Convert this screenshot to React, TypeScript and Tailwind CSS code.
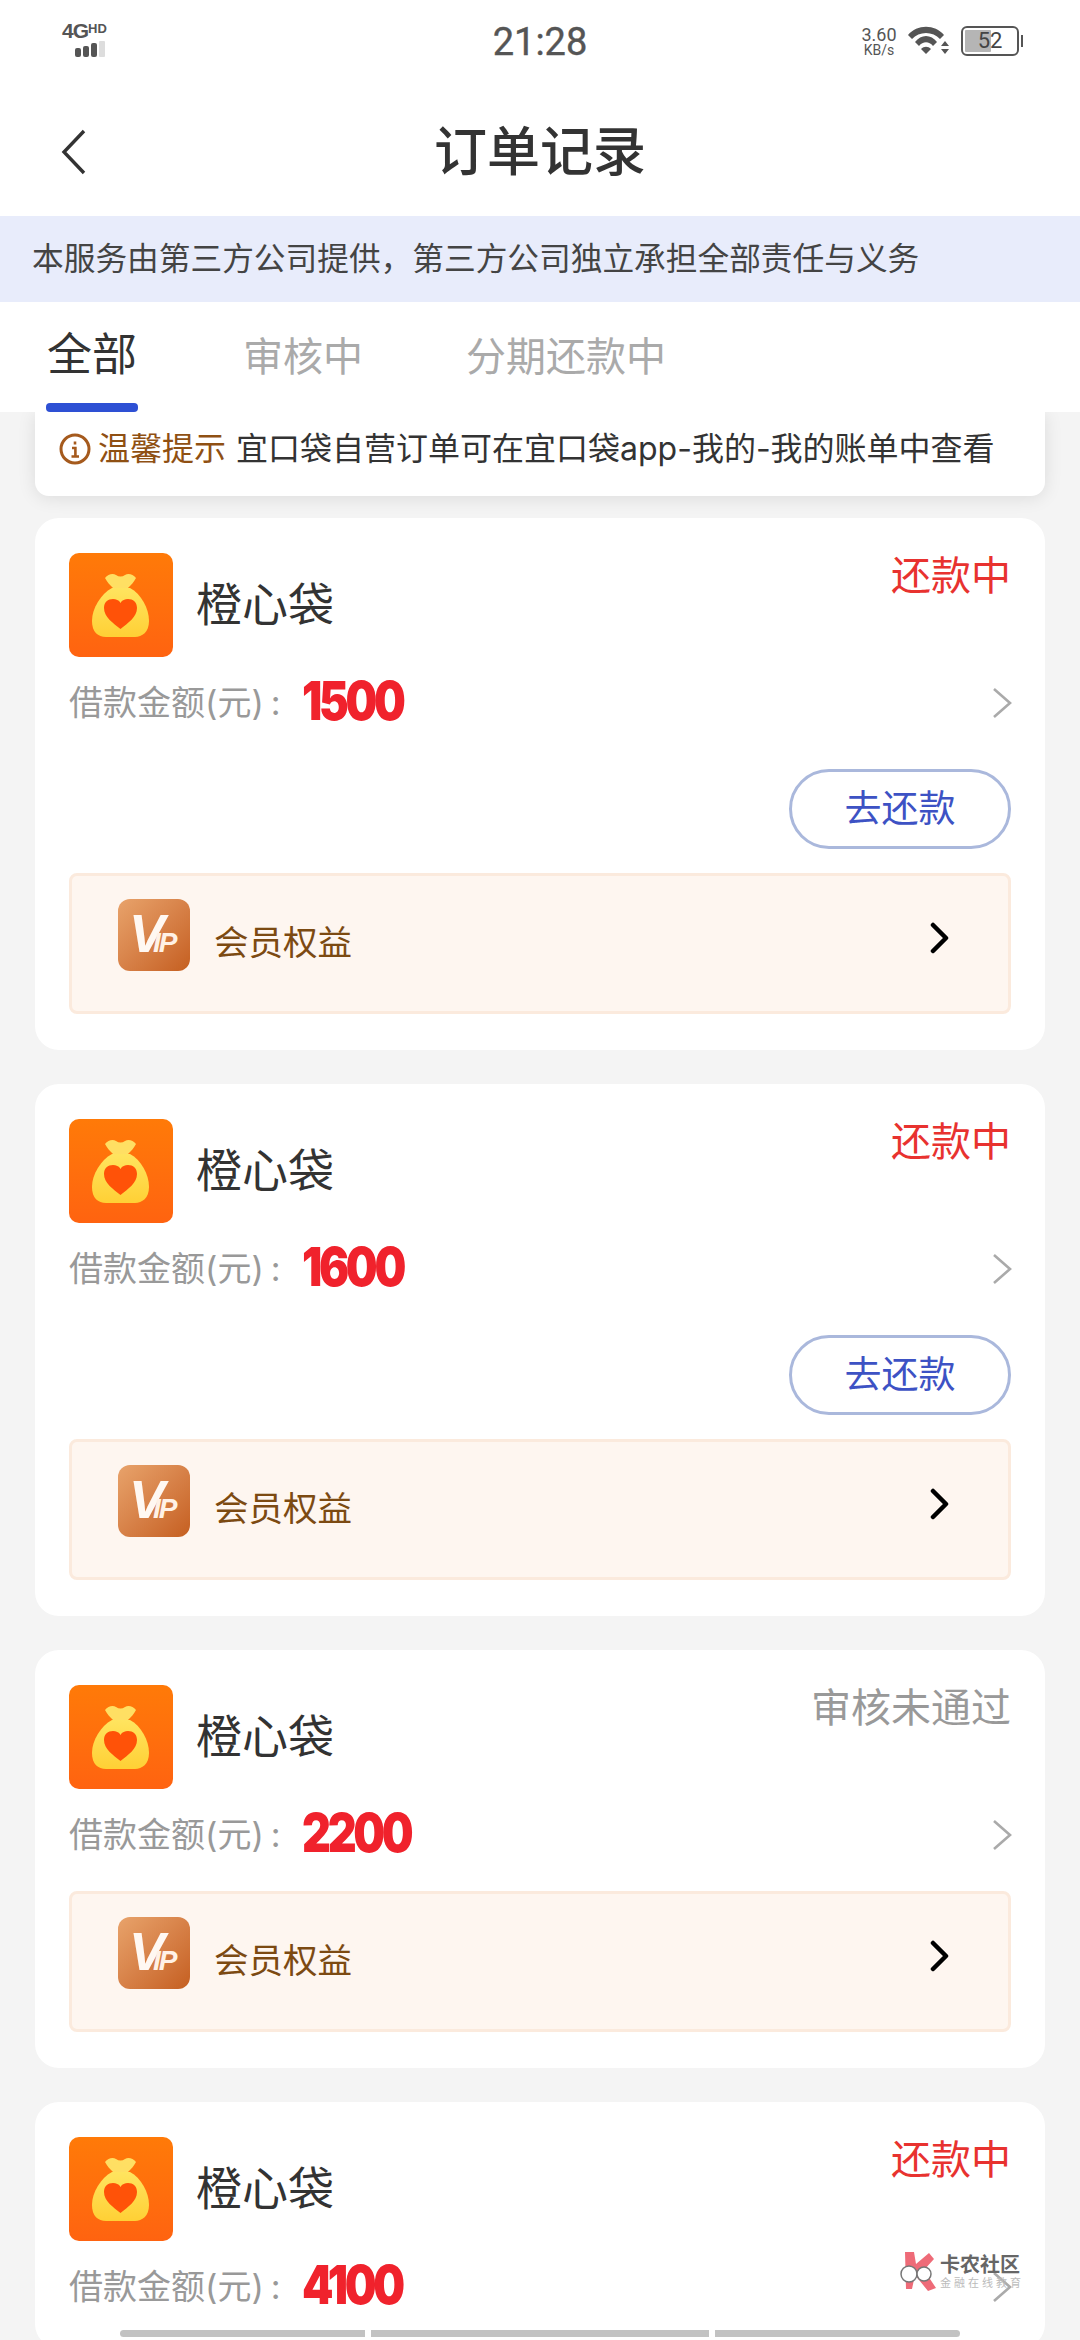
const CJK = "font-['Inter','Noto_Sans_CJK_SC',sans-serif]";

type Order = { amount: string; status: string; failed?: boolean; repay?: boolean; vip?: boolean };

const ORDERS: Order[] = [
  { amount: '1500', status: '还款中', repay: true, vip: true },
  { amount: '1600', status: '还款中', repay: true, vip: true },
  { amount: '2200', status: '审核未通过', failed: true, vip: true },
  { amount: '4100', status: '还款中' },
];

function BagIcon() {
  return (
    <div className="w-[104px] h-[104px] shrink-0 rounded-[10px] bg-gradient-to-b from-[#ff7a08] to-[#ff6310] flex items-center justify-center">
      <svg width="104" height="104" viewBox="0 0 104 104">
        <defs>
          <linearGradient id="bag" x1="0" y1="0" x2="0" y2="1">
            <stop offset="0" stopColor="#ffe45f" />
            <stop offset="1" stopColor="#ffd035" />
          </linearGradient>
        </defs>
        <path d="M36 25c3-4 8-5 11-3 3 2 6 2 9 0 3-2 8-1 11 3-2 4-5 7-8 10H44c-3-3-6-6-8-10z" fill="#ffdf63" />
        <path d="M43 35h18c11 6 19 20 19 33 0 11-7 16-14 16H37c-8 0-14-5-14-16 0-13 9-27 20-33z" fill="url(#bag)" />
        <path d="M51.5 76C44 70 35 64 35 55c0-6 4-9 9-9 3 0 6 1 7.5 4 1.5-3 4.5-4 7.5-4 5 0 9 3 9 9 0 9-9 15-16.5 21z" fill="#ff5208" />
      </svg>
    </div>
  );
}

function VipIcon() {
  return (
    <div className="w-[72px] h-[72px] rounded-[12px] bg-gradient-to-br from-[#e8a36b] to-[#c55f1f] overflow-hidden pl-[11px] pt-[2px]">
      <span className="font-['Liberation_Sans',sans-serif] font-bold italic text-[54px] leading-[64px] text-[#fff8f2] whitespace-nowrap">
        <span className="tracking-[-12px]">V</span>
        <span className="text-[28px] tracking-[-2px] text-[#fff1e6]">IP</span>
      </span>
    </div>
  );
}

function OrderCard({ order }: { order: Order }) {
  return (
    <div className="bg-white rounded-[24px] px-[34px] pt-[35px] pb-[36px]">
      <div className="flex justify-between items-start">
        <div className="flex items-center">
          <BagIcon />
          <span className="ml-[23px] -mt-[2px] text-[46px] leading-[60px] text-[#333]">橙心袋</span>
        </div>
        <span className={`text-[40px] leading-[46px] ${order.failed ? 'text-[#999]' : 'text-[#e8322f]'}`}>
          {order.status}
        </span>
      </div>
      <div className="mt-[21px] h-[50px] flex items-center justify-between">
        <div className="flex items-center">
          <span className="text-[34px] leading-[50px] text-[#999]">借款金额(元)</span>
          <span className="ml-[7px] text-[34px] leading-[50px] text-[#999]">:</span>
          <span className="ml-[21px] w-[110px] font-['Inter',sans-serif] font-black text-[54px] leading-[50px] tracking-[-4px] text-[#f0222c] origin-left scale-x-[0.83] -mt-[4px]">
            {order.amount}
          </span>
        </div>
        <svg width="22" height="32" viewBox="0 0 22 32" fill="none" className="mr-[-2px]">
          <path d="M3 2l16 14L3 30" stroke="#aaa" strokeWidth="2.6" />
        </svg>
      </div>
      {order.repay && (
        <div className="mt-[41px] flex justify-end">
          <div className="w-[222px] h-[80px] rounded-full border-[3px] border-[#aab8dc] flex items-center justify-center text-[37px] text-[#3d52c4]">
            去还款
          </div>
        </div>
      )}
      {order.vip && (
        <div
          className={`${order.repay ? 'mt-[24px]' : 'mt-[31px]'} h-[141px] rounded-[8px] border-[3px] border-[#fbeadd] bg-[#fef6f0] pl-[46px] pr-[58px] pt-[23px] flex items-start justify-between`}
        >
          <div className="flex items-center">
            <VipIcon />
            <span className="ml-[24px] mt-[16px] text-[34.5px] leading-[44px] text-[#7c4a12]">会员权益</span>
          </div>
          <svg width="20" height="32" viewBox="0 0 20 32" fill="none" className="mt-[23px]">
            <path d="M3 3l13 13L3 29" stroke="#000" strokeWidth="4.5" strokeLinecap="round" strokeLinejoin="round" />
          </svg>
        </div>
      )}
    </div>
  );
}

function StatusBar() {
  return (
    <div className="h-[70px] relative flex items-center justify-center pt-[14px] bg-white">
      <div className="absolute left-[62px] top-[21px] w-[50px] text-[#555]">
        <div className="font-['Liberation_Sans',sans-serif] font-bold leading-[20px] flex items-start">
          <span className="text-[21px] tracking-[-1px]">4G</span>
          <span className="text-[13px] leading-[15px]">HD</span>
        </div>
        <div className="ml-[13px] flex items-end gap-[2px]">
          <div className="w-[6px] h-[9px] rounded-[2px] bg-[#555]" />
          <div className="w-[6px] h-[11px] rounded-[2px] bg-[#555]" />
          <div className="w-[6px] h-[14px] rounded-[2px] bg-[#555]" />
          <div className="w-[6px] h-[16px] rounded-[1px] bg-[#ddd]" />
        </div>
      </div>
      <span className="font-['Roboto',sans-serif] text-[38px] leading-[44px] text-[#555] [-webkit-text-stroke:0.4px_#555]">21:28</span>
      <div className="absolute left-[858px] top-[25px] flex items-center text-[#555]">
        <div className="w-[42px] font-['Roboto',sans-serif] text-center">
          <div className="text-[18px] leading-[17px]">3.60</div>
          <div className="text-[14px] leading-[14px]">KB/s</div>
        </div>
        <svg width="44" height="32" viewBox="0 0 44 32" className="ml-[8px]">
          <path d="M0 10C9 -1 27 -1 36 10l-4 4C25 6 11 6 4 14z" fill="#555" />
          <path d="M7 17C13 9 23 9 29 17l-4 4C21 16 15 16 11 21z" fill="#555" />
          <path d="M13 24c3-3 7-3 10 0l-5 5z" fill="#555" />
          <path d="M33 21h8l-4-5zM33 24h8l-4 5z" fill="#555" />
        </svg>
        <div className="relative ml-[9px] w-[58px] h-[30px] rounded-[6px] border-[2px] border-[#555] p-[2px]">
          <div className="h-full w-[52%] bg-[#b5b5b5] rounded-[1px]" />
          <span className="absolute inset-0 flex items-center justify-center font-['Roboto',sans-serif] text-[22px] leading-[26px] text-[#444]">
            52
          </span>
          <div className="absolute -right-[6px] top-[7px] w-[2px] h-[12px] bg-[#555]" />
        </div>
      </div>
    </div>
  );
}

function Watermark() {
  return (
    <div className="absolute left-[899px] top-[2252px] flex items-center pointer-events-none">
      <svg width="40" height="40" viewBox="0 0 40 40">
        <path d="M6 0h9l2 12L30 1l5 6-10 11 12 18-8 3-13-16-3 14H7z" fill="#ee6b78" />
        <circle cx="10" cy="22" r="8" fill="#fff" stroke="#777" strokeWidth="1.5" />
        <circle cx="25" cy="22" r="7" fill="#fff" stroke="#777" strokeWidth="1.5" />
      </svg>
      <div className="ml-[1px] w-[82px]">
        <div className="text-[20px] leading-[22px] font-bold text-[#666] whitespace-nowrap">卡农社区</div>
        <div className="text-[11px] leading-[14px] tracking-[3px] text-[#bbb] whitespace-nowrap">金融在线教育</div>
      </div>
    </div>
  );
}

export default function App() {
  return (
    <div className={`relative w-[1080px] h-[2340px] overflow-hidden bg-[#f4f4f4] ${CJK}`}>
      <StatusBar />
      <div className="relative h-[146px] bg-white pt-[18px] flex items-center justify-center">
        <svg width="26" height="46" viewBox="0 0 26 46" fill="none" className="absolute left-[61px] top-[59px]">
          <path d="M23 2L3 23l20 21" stroke="#333" strokeWidth="3.4" />
        </svg>
        <h1 className="text-[53px] leading-[70px] font-medium text-[#333]">订单记录</h1>
      </div>
      <div className="h-[86px] bg-[#e8ecfb] pl-[32px] flex items-center text-[31.7px] text-[#444] whitespace-nowrap">
        本服务由第三方公司提供，第三方公司独立承担全部责任与义务
      </div>
      <div className="relative z-10 h-[110px] bg-white flex items-start">
        <div className="relative ml-[46px] w-[92px] text-center text-[45px] leading-[106px] text-[#333]">
          全部
          <div className="absolute left-0 top-[101px] w-[92px] h-[9px] rounded-[4px] bg-[#2e50d4]" />
        </div>
        <span className="ml-[105px] mt-[2px] text-[40px] leading-[106px] text-[#aaa]">审核中</span>
        <span className="ml-[103px] mt-[2px] text-[40px] leading-[106px] text-[#aaa]">分期还款中</span>
      </div>
      <div className="mx-[35px] h-[84px] bg-white rounded-b-[14px] shadow-[0_2px_18px_rgba(0,0,0,0.1)] pl-[24px] flex items-start pt-[17px] whitespace-nowrap">
        <svg width="32" height="32" viewBox="0 0 32 32" fill="none" className="mt-[4px]">
          <circle cx="16" cy="16" r="14" stroke="#a55a1d" strokeWidth="3" />
          <path d="M16 8.5v3M13 15h3.4v8M12.5 23.5h7.5" stroke="#a55a1d" strokeWidth="2.6" />
        </svg>
        <span className="ml-[7px] text-[32px] leading-[40px] text-[#8f5013]">温馨提示</span>
        <span className="ml-[10px] text-[32px] leading-[40px] text-[#333]">宜口袋自营订单可在宜口袋app-我的-我的账单中查看</span>
      </div>
      <div className="mt-[22px] mx-[35px] flex flex-col gap-[34px]">
        {ORDERS.map((order, i) => (
          <OrderCard key={i} order={order} />
        ))}
      </div>
      <Watermark />
      <div className="absolute left-[120px] top-[2330px] flex gap-[6px]">
        <div className="w-[245px] h-[7px] rounded-l-full bg-[#c2c2c2]" />
        <div className="w-[338px] h-[7px] bg-[#c2c2c2]" />
        <div className="w-[245px] h-[7px] rounded-r-full bg-[#c2c2c2]" />
      </div>
    </div>
  );
}
